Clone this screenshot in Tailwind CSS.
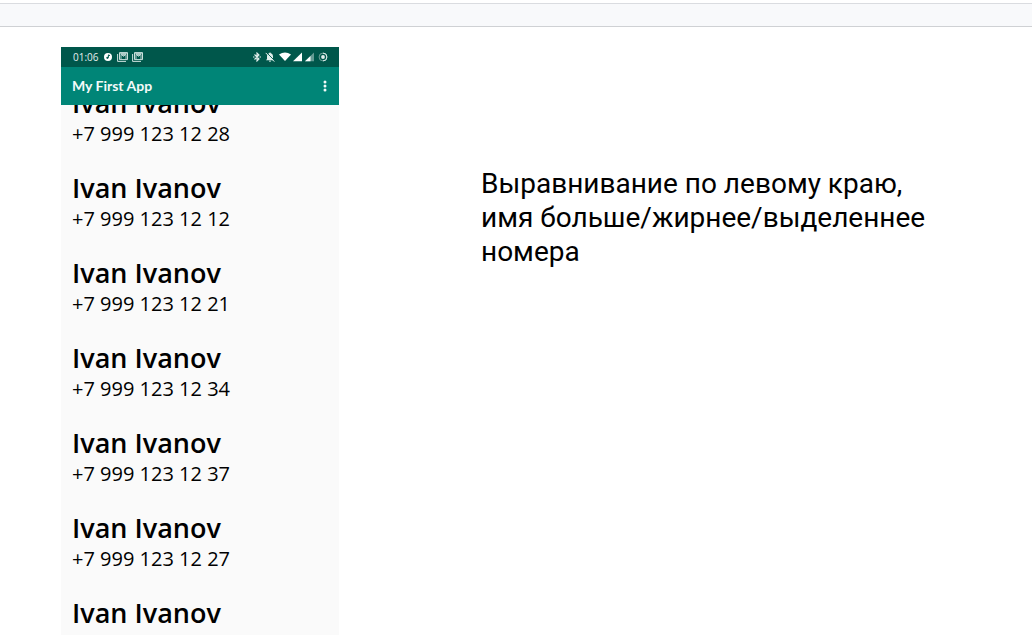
<!DOCTYPE html>
<html lang="ru">
<head>
<meta charset="utf-8">
<meta name="viewport" content="width=device-width, initial-scale=1">
<title>My First App</title>
<script src="https://cdn.jsdelivr.net/npm/@tailwindcss/browser@4"></script>
</head>
<body class="flex h-screen flex-col overflow-hidden bg-white text-black">
<header class="mt-[3px] h-6 shrink-0 border-t border-b border-t-[#dadce0] border-b-[#cfd1d4] bg-[#f8f9fb]"></header>
<main class="flex min-h-0 flex-1 items-stretch pt-5 pr-16 pb-1.5 pl-[61px]">
  <section class="flex w-[278px] shrink-0 flex-col bg-[#fafafa] font-['Open_Sans',sans-serif]" aria-label="My First App">
    <div class="flex h-5 shrink-0 items-center bg-[#00574b] pr-[11px] pl-3 text-[#e3efed]">
      <span class="text-[10px]">01:06</span>
      <svg class="ml-[5px] size-2" viewBox="0 0 8 8"><circle cx="4" cy="4" r="4" fill="#fff"/><path d="M4.400 4.700V1.900L6 2.600" fill="none" stroke="#00574b"/><circle cx="3.400" cy="4.800" r="1.100" fill="#00574b"/></svg>
      <svg class="ml-[5px] h-2.5 w-[11px]" viewBox="0 0 11 10" fill="none" stroke="currentColor"><path d="M.6 2v7.400H9" stroke-width=".9"/><path d="M2.500.6h8v7h-8z" stroke-width=".9"/><path d="M2.500 1h8L6.500 4z" fill="currentColor" stroke="none" opacity=".75"/><path d="M4 7V2.300l2.500 2L9 2.300V7" stroke-width=".8"/></svg>
      <svg class="ml-1 h-2.5 w-[11px]" viewBox="0 0 11 10" fill="none" stroke="currentColor"><path d="M.6 2v7.400H9" stroke-width=".9"/><path d="M2.500.6h8v7h-8z" stroke-width=".9"/><path d="M2.500 1h8L6.500 4z" fill="currentColor" stroke="none" opacity=".75"/><path d="M4 7V2.300l2.500 2L9 2.300V7" stroke-width=".8"/></svg>
      <svg class="ml-auto h-2.5 w-2" viewBox="0 0 8 10" fill="none" stroke="currentColor" stroke-width="1.100"><path d="M1.500 2.500 6 7 4 9V1l2 2-4.500 4.500M0 5h1.500M6.500 5H8"/></svg>
      <svg class="ml-1 size-2.5" viewBox="0 0 10 10"><path d="M5 .5c.6 0 .8.400.8.800C7.500 1.800 8 3 8 4.500V7l1 1.200H1L2 7V4.500C2 3 2.700 1.800 4.200 1.300 4.200.900 4.400.5 5 .5zM4 8.700h2c0 .6-.5 1-1 1s-1-.4-1-1z" fill="currentColor"/><path d="m1.500.500 8 8" stroke="#00574b" stroke-width=".9"/><path d="m.7.900 8.600 8.700" stroke="currentColor" stroke-width="1"/></svg>
      <svg class="ml-1 h-2.5 w-3" viewBox="0 0 12 10"><path d="M0 2.500Q6-1.300 12 2.500L6 9z" fill="#fff"/></svg>
      <svg class="ml-0.5 h-2.5 w-[9px]" viewBox="0 0 9 10"><path d="M9 .5V9.200H0z" fill="#fff"/></svg>
      <svg class="ml-[3px] h-2.5 w-[9px]" viewBox="0 0 9 10"><path d="M9 .5V9.200H0z" fill="currentColor" opacity=".45"/><path d="M5.500 4V9.200H0z" fill="#fff"/></svg>
      <svg class="ml-1 size-2.5" viewBox="0 0 10 10"><circle cx="5" cy="5" r="3.900" fill="none" stroke="currentColor" stroke-width=".8" opacity=".6"/><path d="M5 1.100a3.900 3.900 0 0 1 0 7.800" fill="none" stroke="currentColor"/><circle cx="5" cy="5" r="1.900" fill="currentColor"/></svg>
    </div>
    <div class="flex h-[38px] shrink-0 items-center justify-between bg-[#008577] pr-3 pl-[11px]">
      <h1 class="font-[Lato,sans-serif] text-sm font-bold text-[#f3faf9]">My First App</h1>
      <button type="button" aria-label="Меню" class="flex h-5 w-1 items-center justify-center"><svg class="h-3 w-1" viewBox="0 0 4 12" fill="#f3faf9"><circle cx="2" cy="2" r="1.500"/><circle cx="2" cy="6" r="1.500"/><circle cx="2" cy="10" r="1.500"/></svg></button>
    </div>
    <div class="min-h-0 flex-1 overflow-hidden">
      <ul class="-mt-5 flex flex-col gap-[22px] pl-[11px]">
        <li><p class="text-[27px] leading-[35px] font-semibold">Ivan Ivanov</p><p class="text-[20px] leading-7">+7 999 123 12 28</p></li>
        <li><p class="text-[27px] leading-[35px] font-semibold">Ivan Ivanov</p><p class="text-[20px] leading-7">+7 999 123 12 12</p></li>
        <li><p class="text-[27px] leading-[35px] font-semibold">Ivan Ivanov</p><p class="text-[20px] leading-7">+7 999 123 12 21</p></li>
        <li><p class="text-[27px] leading-[35px] font-semibold">Ivan Ivanov</p><p class="text-[20px] leading-7">+7 999 123 12 34</p></li>
        <li><p class="text-[27px] leading-[35px] font-semibold">Ivan Ivanov</p><p class="text-[20px] leading-7">+7 999 123 12 37</p></li>
        <li><p class="text-[27px] leading-[35px] font-semibold">Ivan Ivanov</p><p class="text-[20px] leading-7">+7 999 123 12 27</p></li>
        <li><p class="text-[27px] leading-[35px] font-semibold">Ivan Ivanov</p></li>
      </ul>
    </div>
  </section>
  <p class="mt-[120px] ml-[142px] flex-1 font-[Roboto,sans-serif] text-[28px] leading-[34px]">Выравнивание по левому краю,<br>имя больше/жирнее/выделеннее<br>номера</p>
</main>
</body>
</html>
